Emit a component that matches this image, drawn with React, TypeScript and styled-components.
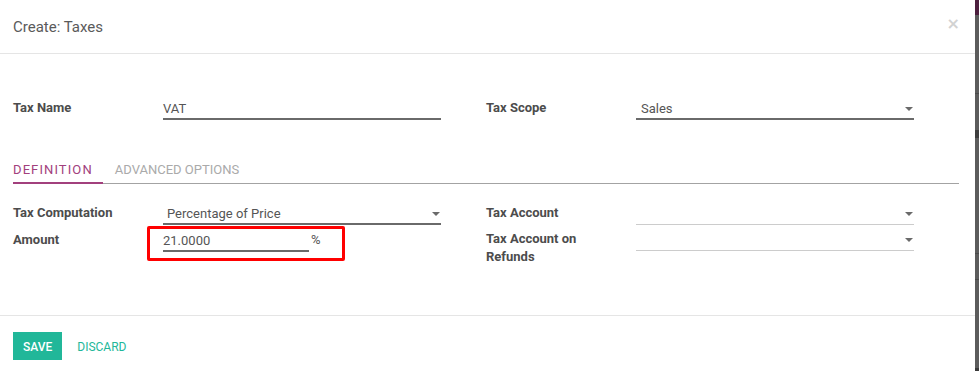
import React from "react";
import styled, { createGlobalStyle } from "styled-components";

const GlobalStyle = createGlobalStyle`
  html, body { margin: 0; padding: 0; }
  body {
    width: 979px;
    height: 371px;
    overflow: hidden;
    font-family: Roboto, "Noto Sans", Arial, sans-serif;
    background: linear-gradient(
      to bottom,
      #4d1f3e 0, #4d1f3e 15px,
      #5c5c5c 15px, #5c5c5c 93px,
      #4a4a4a 93px, #4a4a4a 94px,
      #5c5c5c 94px, #5c5c5c 130px,
      #3e3e3e 130px, #3e3e3e 138px,
      #5c5c5c 138px, #5c5c5c 253px,
      #4a4a4a 253px, #4a4a4a 254px,
      #5c5c5c 254px, #5c5c5c 279px,
      #4a4a4a 279px, #4a4a4a 280px,
      #5c5c5c 280px, #5c5c5c 368px,
      #3a3a3a 368px
    );
  }
`;

const Modal = styled.div`
  width: 975px;
  height: 371px;
  background: #fff;
  display: flex;
  flex-direction: column;
  box-sizing: border-box;
`;

const Header = styled.div`
  height: 54px;
  box-sizing: border-box;
  border-bottom: 1px solid #e5e5e5;
  padding: 0 15px 0 13px;
  display: flex;
  align-items: center;
  justify-content: space-between;
`;

const Title = styled.h4`
  margin: 0;
  font-size: 15px;
  font-weight: 400;
  color: #5a5a5a;
  line-height: 20px;
`;

const Close = styled.button`
  border: 0;
  background: transparent;
  padding: 0;
  margin-top: -6px;
  font-family: "DejaVu Sans", sans-serif;
  font-size: 16px;
  line-height: 16px;
  font-weight: 700;
  color: #d2d2d2;
  cursor: pointer;
`;

const Body = styled.div`
  flex: 1;
  padding: 44px 16px 0 13px;
`;

const Columns = styled.div`
  display: flex;
  align-items: flex-start;
  gap: 45px;
`;

const Group = styled.div<{ $rowGap?: number }>`
  display: grid;
  grid-template-columns: 150px 278px;
  row-gap: ${(p) => p.$rowGap ?? 5}px;
  align-items: start;
  align-content: start;
`;

const Label = styled.label`
  box-sizing: border-box;
  padding-right: 12px;
  padding-top: 1px;
  font-size: 13px;
  font-weight: 700;
  line-height: 18px;
  color: #4c4c4c;
`;

const Field = styled.div<{ $strong?: boolean; $width?: number }>`
  box-sizing: border-box;
  height: 22px;
  width: ${(p) => (p.$width ? `${p.$width}px` : "100%")};
  border-bottom: ${(p) => (p.$strong ? "2px solid #6a6a6a" : "1px solid #cccccc")};
  display: flex;
  align-items: center;
  justify-content: space-between;
  font-size: 13px;
  line-height: 20px;
  color: #555;
`;

const Value = styled.span<{ $pad?: number }>`
  padding-left: ${(p) => p.$pad ?? 0}px;
  padding-top: 1px;
`;

const Caret = styled.span`
  width: 0;
  height: 0;
  margin-right: 1px;
  margin-top: 1px;
  border-left: 4px solid transparent;
  border-right: 4px solid transparent;
  border-top: 4px solid #6a6a6a;
`;

const AmountCell = styled.div`
  position: relative;
  display: flex;
  align-items: flex-start;
`;

const Unit = styled.span`
  font-size: 13px;
  line-height: 20px;
  color: #555;
  padding-left: 2px;
`;

const Highlight = styled.div`
  position: absolute;
  left: -16px;
  top: -4px;
  width: 198px;
  height: 35px;
  box-sizing: border-box;
  border: 3px solid #ff0000;
  border-radius: 2px;
  pointer-events: none;
`;

const TabList = styled.div`
  display: flex;
  margin: 38px 0 19px;
  border-bottom: 1px solid #a3a3a3;
`;

const Tab = styled.div<{ $active?: boolean; $first?: boolean }>`
  padding: 2px 10px 2px ${(p) => (p.$first ? 0 : 12)}px;
  margin-bottom: -1px;
  font-size: 13px;
  line-height: 20px;
  text-transform: uppercase;
  letter-spacing: ${(p) => (p.$first ? "1.1px" : "0")};
  color: ${(p) => (p.$active ? "#a2407d" : "#aaaaaa")};
  border-bottom: 2px solid ${(p) => (p.$active ? "#a2407d" : "transparent")};
`;

const Footer = styled.div`
  height: 56px;
  box-sizing: border-box;
  border-top: 1px solid #e5e5e5;
  padding: 16px 13px 0;
  display: flex;
  align-items: flex-start;
  gap: 5px;
`;

const PrimaryButton = styled.button`
  height: 28px;
  padding: 1px 10px 0;
  border: 0;
  border-radius: 0;
  background: #21b799;
  color: #fff;
  font-family: Roboto, sans-serif;
  font-size: 12px;
  font-weight: 500;
  text-transform: uppercase;
  cursor: pointer;
`;

const LinkButton = styled.button`
  height: 28px;
  padding: 1px 10px 0;
  border: 0;
  background: transparent;
  color: #21b799;
  font-family: Roboto, sans-serif;
  font-size: 12px;
  font-weight: 400;
  text-transform: uppercase;
  cursor: pointer;
`;

export default function App() {
  return (
    <>
      <GlobalStyle />
      <Modal>
        <Header>
          <Title>Create: Taxes</Title>
          <Close aria-label="close">×</Close>
        </Header>
        <Body>
          <Columns>
            <Group>
              <Label>Tax Name</Label>
              <Field $strong>
                <Value>VAT</Value>
              </Field>
            </Group>
            <Group>
              <Label>Tax Scope</Label>
              <Field $strong>
                <Value $pad={5}>Sales</Value>
                <Caret />
              </Field>
            </Group>
          </Columns>

          <TabList>
            <Tab $active $first>Definition</Tab>
            <Tab>Advanced Options</Tab>
          </TabList>

          <Columns>
            <Group>
              <Label>Tax Computation</Label>
              <Field $strong>
                <Value $pad={4}>Percentage of Price</Value>
                <Caret />
              </Field>
              <Label>Amount</Label>
              <AmountCell>
                <Field $strong $width={146}>
                  <Value>21.0000</Value>
                </Field>
                <Unit>%</Unit>
                <Highlight />
              </AmountCell>
            </Group>
            <Group $rowGap={4}>
              <Label>Tax Account</Label>
              <Field>
                <Value />
                <Caret />
              </Field>
              <Label>Tax Account on Refunds</Label>
              <Field>
                <Value />
                <Caret />
              </Field>
            </Group>
          </Columns>
        </Body>
        <Footer>
          <PrimaryButton>Save</PrimaryButton>
          <LinkButton>Discard</LinkButton>
        </Footer>
      </Modal>
    </>
  );
}
